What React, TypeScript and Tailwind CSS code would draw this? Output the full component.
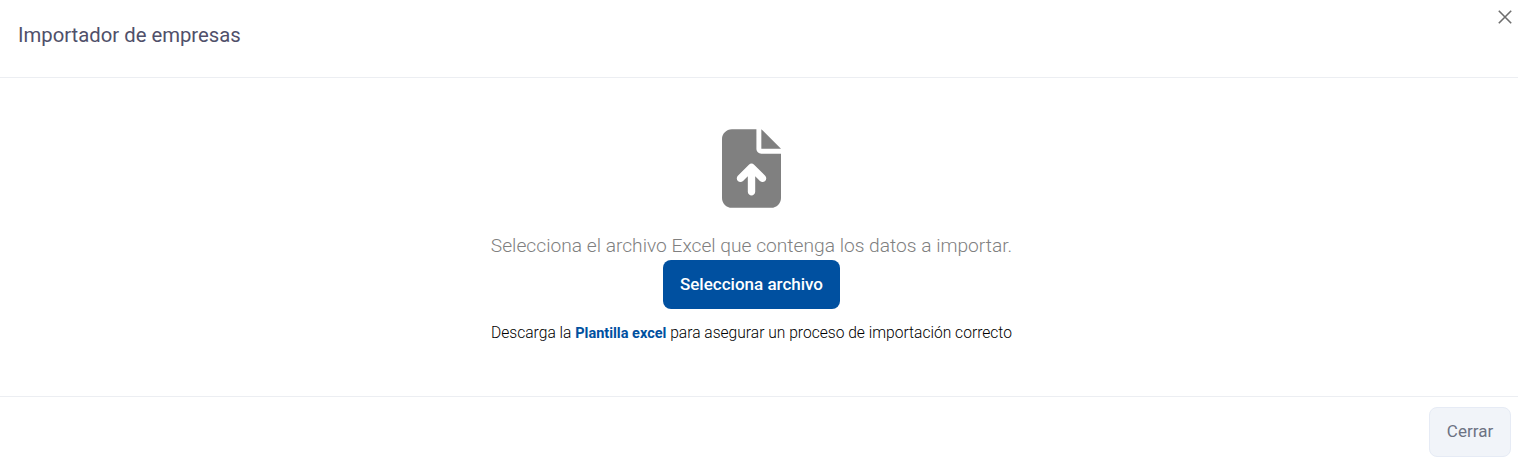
import React from 'react';

const FileUploadIcon = () => (
  <svg viewBox="0 0 384 512" className="h-[79px] w-[59px] fill-[#808080]">
    <path d="M64 0C28.7 0 0 28.7 0 64V448c0 35.3 28.7 64 64 64H320c35.3 0 64-28.7 64-64V160H256c-17.7 0-32-14.3-32-32V0H64zM384 128L256 0V128H384zM216 408c0 13.3-10.7 24-24 24s-24-10.7-24-24V305.9l-31 31c-9.4 9.4-24.6 9.4-33.9 0s-9.4-24.6 0-33.9l72-72c9.4-9.4 24.6-9.4 33.9 0l72 72c9.4 9.4 9.4 24.6 0 33.9s-24.6 9.4-33.9 0l-31-31V408z" />
  </svg>
);

const App: React.FC = () => {
  return (
    <div className="relative flex h-[462px] w-full flex-col overflow-hidden bg-white font-['Roboto',sans-serif]">
      {/* Header */}
      <div className="flex h-[78px] items-center border-b border-[#eceef2] pb-[6px] pl-[18px]">
        <h2 className="text-[20.3px] font-normal text-[#50506a]">Importador de empresas</h2>
      </div>
      <button className="absolute right-[6px] top-[10px] text-[#6e6e6e]">
        <svg viewBox="0 0 14 14" className="h-[14px] w-[14px]" fill="none" stroke="currentColor" strokeWidth={1.6}>
          <path d="M0.8 0.8L13.2 13.2M13.2 0.8L0.8 13.2" />
        </svg>
      </button>

      {/* Body */}
      <div className="flex h-[318px] flex-col items-center pt-[51px] pr-[15px]">
        <FileUploadIcon />
        <p className="mt-[24px] text-[19.2px] leading-[27px] font-light text-[#808080]">
          Selecciona el archivo Excel que contenga los datos a importar.
        </p>
        <button className="mt-[1px] h-[49px] w-[177px] rounded-[8px] bg-[#0050a0] text-[17px] font-medium text-white">
          Selecciona archivo
        </button>
        <p className="mt-[14px] text-[15.6px] leading-[21px] font-light text-black">
          Descarga la <a className="text-[14.5px] font-bold text-[#0050a0]">Plantilla excel</a> para asegurar un proceso de importación correcto
        </p>
      </div>

      {/* Footer */}
      <div className="flex flex-1 items-start justify-end border-t border-[#eceef2] pt-[10px] pr-[7px]">
        <button className="h-[50px] w-[82px] rounded-[8px] border border-[#e6ebf5] bg-[#f1f4f9] text-[17px] text-[#6c7283]">
          Cerrar
        </button>
      </div>
    </div>
  );
};

export default App;
